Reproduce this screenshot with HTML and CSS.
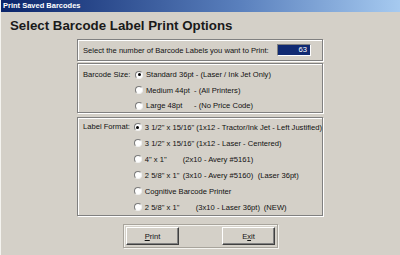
FILE: index.html
```html
<!DOCTYPE html>
<html lang="en">

<head>
    <meta charset="UTF-8">
    <title>Print Saved Barcodes</title>
    <link rel="stylesheet" href="styles.css">
</head>

<body>

    <div class="window">
        <div class="titlebar">Print Saved Barcodes</div>
        <h1>Select Barcode Label Print Options</h1>

        <div class="options">
            <div class="group count-group">
                <span>Select the number of Barcode Labels you want to Print:</span>
                <div class="count-input">63</div>
            </div>

            <div class="group size-group">
                <div class="group-label">Barcode Size:</div>
                <div class="choices">
                    <div class="choice"><span class="radio checked"></span>Standard 36pt - (Laser / Ink Jet Only)</div>
                    <div class="choice"><span class="radio"></span><span class="size-name">Medium 44pt</span>- (All Printers)</div>
                    <div class="choice"><span class="radio"></span><span class="size-name">Large 48pt</span>- (No Price Code)</div>
                </div>
            </div>

            <div class="group format-group">
                <div class="group-label">Label Format:</div>
                <div class="choices">
                    <div class="choice"><span class="radio checked"></span>3 1/2&quot; x 15/16&quot; (1x12 - Tractor/Ink Jet - Left Justified)</div>
                    <div class="choice"><span class="radio"></span>3 1/2&quot; x 15/16&quot; (1x12 - Laser - Centered)</div>
                    <div class="choice"><span class="radio"></span><span class="fmt-short">4&quot; x 1&quot;</span>(2x10 - Avery #5161)</div>
                    <div class="choice"><span class="radio"></span><span class="fmt-short">2 5/8&quot; x 1&quot;</span><span class="fmt-desc">(3x10 - Avery #5160)</span>(Laser 36pt)</div>
                    <div class="choice"><span class="radio"></span>Cognitive Barcode Printer</div>
                    <div class="choice"><span class="radio"></span><span class="fmt-long">2 5/8&quot; x 1&quot;</span><span class="fmt-desc-new">(3x10 - Laser 36pt)</span>(NEW)</div>
                </div>
            </div>

            <div class="button-panel">
                <button type="button"><u>P</u>rint</button>
                <button type="button">E<u>x</u>it</button>
            </div>
        </div>
    </div>

</body>

</html>
```

FILE: styles.css
```css
body {
    margin: 0;
    background: #d4d0c8;
    font-family: 'Liberation Sans', Arial, sans-serif;
}

.window {
    width: 400px;
    height: 255px;
    box-sizing: border-box;
    border-left: 1px solid #f4f3ef;
    background: #d4d0c8;
    overflow: hidden;
}

.titlebar {
    height: 12px;
    line-height: 12px;
    padding-left: 2px;
    background: linear-gradient(to right, #0a246a, #5a80bd 60%, #a6caf0);
    color: white;
    font-size: 7.5px;
    font-weight: bold;
}

h1 {
    margin: 6px 0 0 9px;
    font-size: 13.3px;
    line-height: 15px;
    font-weight: bold;
    color: #1a1a1a;
}

.options {
    margin: 6px 0 0 76px;
    width: 246px;
    font-size: 7.6px;
    color: #111;
}

.group {
    box-sizing: border-box;
    border: 1px solid #808080;
    box-shadow: inset 1px 1px 0 #fff, 1px 1px 0 #fff;
}

.count-group {
    height: 22px;
    display: flex;
    align-items: center;
    justify-content: space-between;
    padding: 0 11px 0 5px;
}

.count-input {
    width: 34px;
    height: 12px;
    box-sizing: border-box;
    border: 1px solid;
    border-color: #808080 #fff #fff #808080;
    background: #102a72;
    color: white;
    text-align: right;
    padding-right: 3px;
    line-height: 10px;
}

.size-group,
.format-group {
    display: flex;
    padding-left: 5px;
}

.size-group {
    height: 50px;
    margin-top: 2px;
    padding-top: 3px;
}

.format-group {
    height: 99px;
    margin-top: 4px;
    padding-top: 1px;
}

.group-label {
    width: 52px;
    line-height: 15.5px;
}

.format-group .group-label {
    line-height: 16px;
}

.choice {
    display: flex;
    align-items: center;
    height: 15.5px;
    white-space: nowrap;
}

.format-group .choice {
    height: 16px;
}

.radio {
    width: 8px;
    height: 8px;
    box-sizing: border-box;
    margin-right: 3px;
    border-radius: 50%;
    border: 1px solid;
    border-color: #7a7a7a #f0f0f0 #f0f0f0 #7a7a7a;
    background: #fff;
    position: relative;
}

.radio.checked::after {
    content: "";
    position: absolute;
    left: 1.5px;
    top: 1.5px;
    width: 3px;
    height: 3px;
    border-radius: 50%;
    background: #000;
}

.size-name {
    width: 48px;
}

.fmt-short {
    width: 38px;
}

.fmt-long {
    width: 51px;
}

.fmt-desc {
    width: 75px;
}

.fmt-desc-new {
    width: 68px;
}

.button-panel {
    box-sizing: border-box;
    width: 155px;
    height: 24px;
    margin: 8px 0 0 46px;
    padding: 0 2px;
    display: flex;
    align-items: center;
    justify-content: space-between;
    border: 1px solid #a8a49c;
    box-shadow: inset 1px 1px 0 #f4f3ef, 1px 1px 0 #f4f3ef;
}

button {
    width: 53px;
    height: 18px;
    padding: 0;
    background: #d4d0c8;
    border: 1px solid;
    border-color: #fff #404040 #404040 #fff;
    box-shadow: inset -1px -1px 0 #808080;
    font-family: 'Liberation Sans', Arial, sans-serif;
    font-size: 7.6px;
    color: #111;
    cursor: pointer;
}
```
